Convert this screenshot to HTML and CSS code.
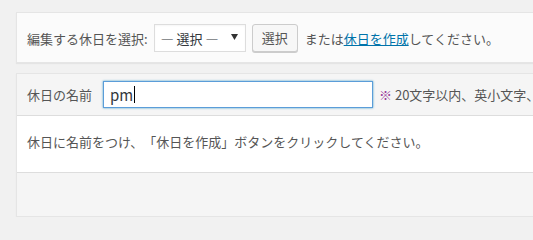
FILE: index.html
```html
<!DOCTYPE html>
<html lang="ja">
<head>
<meta charset="utf-8">
<link rel="stylesheet" href="styles.css">
</head>
<body>
<div class="wrap">
  <div class="box select-box">
    <span class="lbl">編集する休日を選択:</span>
    <div class="select"><span class="sel-text">— 選択 —</span><svg class="tri" width="7" height="6" viewBox="0 0 7 6"><path d="M0 0H7L3.5 6Z" fill="#333"/></svg></div>
    <span class="btn">選択</span>
    <span class="txt">または<a href="#" class="link">休日を作成</a>してください。</span>
  </div>
  <div class="box edit-box">
    <div class="head">
      <span class="name-lbl">休日の名前</span>
      <div class="input"><span class="val">pm</span><span class="caret"></span></div>
      <span class="note"><span class="mark">※</span> 20文字以内、英小文字、半角数字、ハイフンのみ使用できます。</span>
    </div>
    <div class="body">休日に名前をつけ、「休日を作成」ボタンをクリックしてください。</div>
    <div class="foot"></div>
  </div>
</div>
</body>
</html>
```
FILE: styles.css
```css
html, body {
  margin: 0;
  padding: 0;
  background: #f1f1f1;
  overflow: hidden;
}
body {
  font-family: "Noto Sans CJK JP", "Noto Sans", sans-serif;
  font-size: 13px;
  color: #555;
  text-spacing-trim: space-all;
}
.wrap {
  padding: 12px 0 0 16px;
  width: 800px;
}
.box {
  border: 1px solid #e5e5e5;
  box-shadow: 0 1px 1px rgba(0,0,0,0.05);
}
.select-box {
  background: #fbfbfb;
  display: flex;
  align-items: center;
  padding: 11px 10px 10px;
  white-space: nowrap;
}
.lbl { margin-right: 6px; }
.select {
  height: 26px;
  border: 1px solid #ddd;
  background: #fff;
  display: flex;
  align-items: center;
  justify-content: space-between;
  padding: 0 7px 0 6px;
  box-sizing: content-box;
  box-shadow: inset 0 1px 2px rgba(0,0,0,0.04);
  color: #32373c;
  width: 77px;
}
.tri { margin-top: -3px; }
.btn {
  margin-left: 6px;
  height: 26px;
  line-height: 26px;
  padding: 0 9px;
  border: 1px solid #ccc;
  border-radius: 3px;
  background: #f7f7f7;
  box-shadow: 0 1px 0 #ccc;
  color: #555;
}
.txt { margin-left: 7px; }
.link { color: #0073aa; text-decoration: underline; }
.edit-box {
  margin-top: 10px;
  background: #fff;
}
.head {
  background: #f5f5f5;
  border-bottom: 1px solid #ddd;
  display: flex;
  align-items: center;
  padding: 7px 10px 7px;
  white-space: nowrap;
}
.name-lbl { width: 76px; }
.input {
  width: 259px;
  height: 25px;
  border: 1px solid #5b9dd9;
  box-shadow: 0 0 2px rgba(30,140,190,0.8);
  background: #fff;
  display: flex;
  align-items: center;
  padding: 0 3px 0 6px;
  color: #32373c;
  font-size: 15px;
}
.caret {
  display: inline-block;
  width: 1px;
  height: 17px;
  background: #000;
  margin-left: 1px;
}
.note { margin-left: 6px; }
.mark { color: #9b3c9b; }
.body {
  padding: 0 10px;
  height: 56px;
  line-height: 52px;
  border-bottom: 1px solid #ddd;
}
.foot {
  background: #f5f5f5;
  height: 43px;
}
```
